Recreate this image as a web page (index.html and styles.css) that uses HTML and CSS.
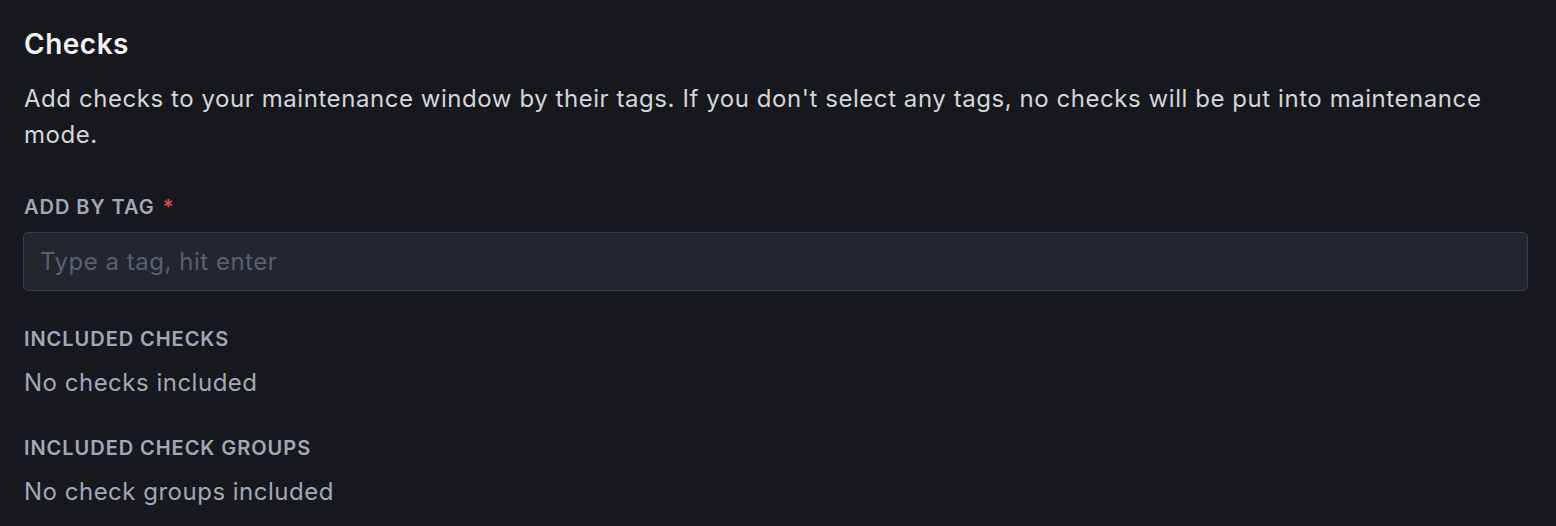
FILE: index.html
```html
<!DOCTYPE html>
<html lang="en">
<head>
<meta charset="utf-8">
<title>Checks</title>
<link rel="stylesheet" href="styles.css">
</head>
<body>
<section class="panel">
  <h2 class="title">Checks</h2>
  <p class="desc">Add checks to your maintenance window by their tags. If you don't select any tags, no checks will be put into maintenance mode.</p>
  <div class="field first">
    <label class="label" for="tag">ADD BY TAG <span class="req">*</span></label>
    <input id="tag" class="input" type="text" placeholder="Type a tag, hit enter">
  </div>
  <div class="field">
    <div class="label">INCLUDED CHECKS</div>
    <div class="empty">No checks included</div>
  </div>
  <div class="field">
    <div class="label">INCLUDED CHECK GROUPS</div>
    <div class="empty">No check groups included</div>
  </div>
</section>
</body>
</html>
```
FILE: styles.css
```css
html, body {
  margin: 0;
  padding: 0;
  background: #17181d;
}
body {
  font-family: Inter, "Noto Sans", sans-serif;
}
.panel {
  padding: 26px 27px 0 24px;
  display: flex;
  flex-direction: column;
}
.title {
  margin: 0;
  font-size: 28px;
  line-height: 36px;
  font-weight: 600;
  letter-spacing: 0.5px;
  color: #f1f2f4;
}
.desc {
  margin: 19px 0 0;
  font-size: 24px;
  line-height: 36px;
  letter-spacing: 0.56px;
  color: #d3d6dc;
}
.field {
  display: flex;
  flex-direction: column;
  gap: 11px;
  margin-top: 34px;
}
.field.first {
  margin-top: 40px;
}
.label {
  font-size: 20px;
  line-height: 28px;
  font-weight: 600;
  letter-spacing: 0.95px;
  color: #a1a8b6;
}
.req {
  color: #e5484d;
  margin-left: 2px;
}
.input {
  box-sizing: border-box;
  width: 100%;
  height: 59px;
  margin: 0 0 0 -1px;
  padding: 0 16px;
  background: #22262f;
  border: 1px solid #393e4a;
  border-radius: 5px;
  font-family: inherit;
  font-size: 24px;
  letter-spacing: 0.52px;
  color: #d3d6dc;
  outline: none;
}
.input::placeholder {
  color: #596170;
}
.empty {
  font-size: 24px;
  line-height: 36px;
  letter-spacing: 0.5px;
  color: #a1a8b6;
  padding-top: 1px;
  margin-bottom: -1px;
}
```
